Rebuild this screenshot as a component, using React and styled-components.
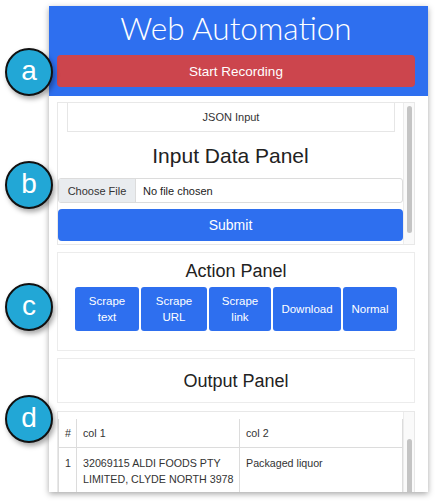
import React from 'react';
import styled, { createGlobalStyle } from 'styled-components';

const BLUE = '#2e6fef';

const GlobalStyle = createGlobalStyle`
  * {
    box-sizing: border-box;
  }
  body {
    margin: 0;
    background: #fff;
    font-family: 'Liberation Sans', Arial, sans-serif;
    color: #212529;
  }
`;

const Page = styled.div`
  position: relative;
  width: 436px;
  height: 504px;
  padding: 6px 0 0 49px;
  overflow: hidden;
`;

const Card = styled.div`
  width: 379px;
  height: 486px;
  background: #fff;
  box-shadow: 0 2px 6px rgba(0, 0, 0, 0.35);
  display: flex;
  flex-direction: column;
  overflow: hidden;
`;

const Header = styled.header`
  background: ${BLUE};
  padding: 1px 13px 9px 8px;
`;

const Title = styled.h1`
  margin: 0 0 6px;
  font-family: Lato, 'Liberation Sans', sans-serif;
  font-weight: 300;
  font-size: 31.5px;
  line-height: 42px;
  color: #fff;
  text-align: center;
`;

const RecordButton = styled.button`
  display: block;
  width: 100%;
  height: 32px;
  border: none;
  border-radius: 4px;
  background: #cc454d;
  color: #fff;
  font-family: inherit;
  font-size: 13.5px;
`;

const Body = styled.div`
  flex: 1;
  min-height: 0;
  padding: 6px 13px 0 8px;
  display: flex;
  flex-direction: column;
  gap: 7px;
`;

/* scroll boxes: content on the left, a thin track on the right */
const ScrollBox = styled.section`
  flex: ${(p) => (p.$height ? 'none' : '1')};
  height: ${(p) => (p.$height ? `${p.$height}px` : 'auto')};
  min-height: 0;
  margin-top: ${(p) => p.$offset || 0}px;
  border: 1px solid #e8e8e8;
  border-bottom: ${(p) => (p.$open ? 'none' : '1px solid #e8e8e8')};
  display: flex;
  overflow: hidden;
`;

const ScrollContent = styled.div`
  flex: 1;
  min-width: 0;
  padding-top: ${(p) => p.$pad || 0}px;
`;

const Track = styled.div`
  width: 11px;
  flex: none;
  background: #fafafa;
  border-left: 1px solid #ececec;
  padding: ${(p) => p.$start}px 2px 0 3px;
`;

const Thumb = styled.div`
  height: ${(p) => p.$size}px;
  border-radius: 3px;
  background: #c4c4c4;
`;

const JsonBox = styled.div`
  margin: 0 8px 0 9px;
  height: 29px;
  border: 1px solid #e6e6e6;
  border-top: none;
  display: flex;
  align-items: center;
  justify-content: center;
  font-size: 11px;
  color: #333;
`;

const PanelTitle = styled.h2`
  margin: 0;
  font-weight: 400;
  font-size: ${(p) => p.$size}px;
  line-height: ${(p) => p.$size + 4}px;
  text-align: center;
  color: #222;
`;

const InputTitle = styled(PanelTitle)`
  padding: 11px 0 10px;
`;

const FileField = styled.div`
  height: 25px;
  border: 1px solid #dcdcdc;
  border-radius: 3px;
  display: flex;
  align-items: stretch;
  font-size: 11px;
  overflow: hidden;
`;

const ChooseLabel = styled.span`
  width: 77px;
  background: #e9ecef;
  border-right: 1px solid #dcdcdc;
  display: flex;
  align-items: center;
  justify-content: center;
  color: #333;
`;

const FileName = styled.span`
  padding-left: 7px;
  display: flex;
  align-items: center;
  color: #222;
`;

const SubmitButton = styled.button`
  display: block;
  width: 100%;
  height: 32px;
  margin-top: 6px;
  border: none;
  border-radius: 4px;
  background: ${BLUE};
  color: #fff;
  font-family: inherit;
  font-size: 14px;
`;

const Panel = styled.section`
  flex: none;
  height: ${(p) => p.$height}px;
  border: 1px solid #ececec;
  padding-top: ${(p) => p.$pad}px;
  display: flex;
  flex-direction: column;
  align-items: center;
  justify-content: ${(p) => (p.$pad ? 'flex-start' : 'center')};
`;

const ButtonGroup = styled.div`
  margin-top: 5px;
  display: flex;
  gap: 2px;
`;

const ActionButton = styled.button`
  width: ${(p) => p.$width}px;
  height: 44px;
  padding: 0 4px;
  border: none;
  border-radius: 3px;
  background: ${BLUE};
  color: #fff;
  font-family: inherit;
  font-size: 11.5px;
  line-height: 16px;
`;

const Table = styled.table`
  width: 100%;
  table-layout: fixed;
  border-collapse: collapse;
  font-size: 10.7px;
  line-height: 16px;
  color: #333;
`;

const Cell = styled.td`
  border: 1px solid #dcdcdc;
  border-top: none;
  padding: ${(p) => (p.$head ? '6px' : '7px')} 2px ${(p) => (p.$head ? '6px' : '7px')} 6px;
  vertical-align: top;
  width: ${(p) => p.$width || 'auto'};
`;

const Marker = styled.div`
  position: absolute;
  left: 5px;
  top: ${(p) => p.$top}px;
  width: 48px;
  height: 48px;
  border-radius: 50%;
  background: #22a7d6;
  border: 2px solid #111;
  box-shadow: 2px 3px 5px rgba(0, 0, 0, 0.35);
  color: #fff;
  font-size: 28px;
  line-height: 1;
  display: flex;
  align-items: center;
  justify-content: center;
  padding-bottom: 3px;
`;

const actions = [
  { label: ['Scrape', 'text'], width: 64 },
  { label: ['Scrape', 'URL'], width: 66 },
  { label: ['Scrape', 'link'], width: 62 },
  { label: ['Download'], width: 68 },
  { label: ['Normal'], width: 54 },
];

export default function App() {
  return (
    <>
      <GlobalStyle />
      <Page>
        <Card>
          <Header>
            <Title>Web Automation</Title>
            <RecordButton>Start Recording</RecordButton>
          </Header>

          <Body>
            <ScrollBox $height={143}>
              <ScrollContent>
                <JsonBox>JSON Input</JsonBox>
                <InputTitle $size={21}>Input Data Panel</InputTitle>
                <FileField>
                  <ChooseLabel>Choose File</ChooseLabel>
                  <FileName>No file chosen</FileName>
                </FileField>
                <SubmitButton>Submit</SubmitButton>
              </ScrollContent>
              <Track $start={3}>
                <Thumb $size={127} />
              </Track>
            </ScrollBox>

            <Panel $height={99} $pad={7}>
              <PanelTitle $size={18}>Action Panel</PanelTitle>
              <ButtonGroup>
                {actions.map((a) => (
                  <ActionButton key={a.label.join(' ')} $width={a.width}>
                    {a.label.map((line, i) => (
                      <React.Fragment key={line}>
                        {i > 0 && <br />}
                        {line}
                      </React.Fragment>
                    ))}
                  </ActionButton>
                ))}
              </ButtonGroup>
            </Panel>

            <Panel $height={45} $pad={0}>
              <PanelTitle $size={18}>Output Panel</PanelTitle>
            </Panel>

            <ScrollBox $offset={1} $open>
              <ScrollContent $pad={7}>
                <Table>
                  <tbody>
                    <tr>
                      <Cell $head $width="18px">#</Cell>
                      <Cell $head $width="163px">col 1</Cell>
                      <Cell $head>col 2</Cell>
                    </tr>
                    <tr>
                      <Cell>1</Cell>
                      <Cell>32069115 ALDI FOODS PTY LIMITED, CLYDE NORTH 3978</Cell>
                      <Cell>Packaged liquor</Cell>
                    </tr>
                  </tbody>
                </Table>
              </ScrollContent>
              <Track $start={27}>
                <Thumb $size={80} />
              </Track>
            </ScrollBox>
          </Body>
        </Card>

        <Marker $top={48}>a</Marker>
        <Marker $top={161}>b</Marker>
        <Marker $top={283}>c</Marker>
        <Marker $top={395}>d</Marker>
      </Page>
    </>
  );
}
